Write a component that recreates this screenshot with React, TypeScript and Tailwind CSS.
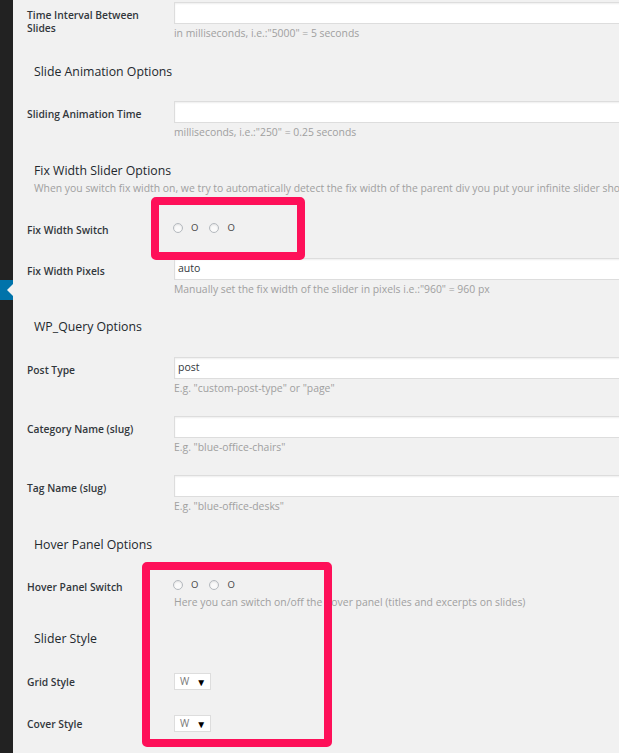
import React from "react";

const font = { fontFamily: '"Open Sans", "Noto Sans", sans-serif' };

function Label({ children, pt = "pt-[7px]" }: { children: React.ReactNode; pt?: string }) {
  return (
    <div className={`w-[147px] shrink-0 ${pt} text-[10.3px] leading-[13px] font-semibold text-[#32373c]`}>
      {children}
    </div>
  );
}

function Desc({ children }: { children: React.ReactNode }) {
  return <div className="mt-[2px] text-[10.4px] leading-[14px] text-[#a0a0a0] whitespace-nowrap">{children}</div>;
}

function TextInput({ value = "" }: { value?: string }) {
  return (
    <div className="w-[470px] h-[22px] bg-white border border-[#dddddd] shadow-[inset_0_1px_2px_rgba(0,0,0,0.07)] flex items-center pl-[3px] text-[10.5px] text-[#32373c]">
      {value}
    </div>
  );
}

function InputRow({ label, value, desc, mt }: { label: React.ReactNode; value?: string; desc: string; mt: string }) {
  return (
    <div className={`flex ${mt}`}>
      <Label>{label}</Label>
      <div className="flex flex-col">
        <TextInput value={value} />
        <Desc>{desc}</Desc>
      </div>
    </div>
  );
}

function Heading({ children, mt }: { children: React.ReactNode; mt: string }) {
  return <div className={`${mt} pl-[7px] text-[12.3px] leading-[18px] text-[#23282d]`}>{children}</div>;
}

function Radio() {
  return <span className="inline-block w-[10px] h-[10px] rounded-full border border-[#b4b9be] bg-[#fafafa] shadow-[inset_0_1px_2px_rgba(0,0,0,0.1)]" />;
}

function Radios({ h = "h-[22px]" }: { h?: string }) {
  return (
    <div className={`flex items-center ${h} text-[9.5px] text-[#444] -ml-[1px]`}>
      <Radio />
      <span className="ml-[8px] leading-none">O</span>
      <span className="ml-[11px] flex items-center">
        <Radio />
      </span>
      <span className="ml-[8px] leading-none">O</span>
    </div>
  );
}

function Select({ mt, label }: { mt: string; label: string }) {
  return (
    <div className={`flex ${mt}`}>
      <Label pt="pt-[3px]">{label}</Label>
      <div className="w-[37px] h-[17px] bg-white border border-[#dddddd] flex items-center pl-[5px] text-[10px] text-[#777]">
        <span>W</span>
        <span className="ml-[7px] text-[10px] text-black leading-none">▼</span>
      </div>
    </div>
  );
}

export default function App() {
  return (
    <div className="relative w-[619px] h-[753px] overflow-hidden bg-[#f1f1f1] flex" style={font}>
      <div className="w-[13px] shrink-0 bg-[#222222]">
        <div className="relative mt-[280px] h-[20px] bg-[#0073aa]">
          <div className="absolute right-0 top-[4px] w-0 h-0 border-y-[6px] border-y-transparent border-r-[6px] border-r-[#f1f1f1]" />
        </div>
      </div>
      <div className="flex-1 min-w-0 pl-[14px] pt-[2px]">
        <InputRow
          mt="mt-0"
          label={
            <>
              Time Interval Between
              <br />
              Slides
            </>
          }
          desc={'in milliseconds, i.e.:"5000" = 5 seconds'}
        />
        <Heading mt="mt-[23px]">Slide Animation Options</Heading>
        <InputRow mt="mt-[20px]" label="Sliding Animation Time" desc={'milliseconds, i.e.:"250" = 0.25 seconds'} />
        <Heading mt="mt-[23px]">Fix Width Slider Options</Heading>
        <div className="pl-[7px] mt-[1px] text-[10.4px] leading-[14px] text-[#a0a0a0] whitespace-nowrap">
          When you switch fix width on, we try to automatically detect the fix width of the parent div you put your infinite slider shortcode in
        </div>
        <div className="flex mt-[22px]">
          <Label>Fix Width Switch</Label>
          <Radios />
        </div>
        <InputRow
          mt="mt-[19px]"
          label="Fix Width Pixels"
          value="auto"
          desc={'Manually set the fix width of the slider in pixels i.e.:"960" = 960 px'}
        />
        <Heading mt="mt-[22px]">WP_Query Options</Heading>
        <InputRow mt="mt-[21px]" label="Post Type" value="post" desc={'E.g. "custom-post-type" or "page"'} />
        <InputRow mt="mt-[21px]" label="Category Name (slug)" desc={'E.g. "blue-office-chairs"'} />
        <InputRow mt="mt-[21px]" label="Tag Name (slug)" desc={'E.g. "blue-office-desks"'} />
        <Heading mt="mt-[23px]">Hover Panel Options</Heading>
        <div className="flex mt-[20px]">
          <Label>Hover Panel Switch</Label>
          <div className="flex flex-col">
            <Radios h="h-[21px]" />
            <div className="text-[10.4px] leading-[14px] text-[#a0a0a0] whitespace-nowrap">
              Here you can switch on/off the hover panel (titles and excerpts on slides)
            </div>
          </div>
        </div>
        <Heading mt="mt-[21px]">Slider Style</Heading>
        <Select mt="mt-[25px]" label="Grid Style" />
        <Select mt="mt-[25px]" label="Cover Style" />
      </div>

      <div className="absolute left-[151px] top-[197px] w-[154px] h-[63px] border-[8px] border-[#fe1059] rounded-[5px]" />
      <div className="absolute left-[142px] top-[562px] w-[190px] h-[185px] border-[8px] border-[#fe1059] rounded-[5px]" />
    </div>
  );
}
